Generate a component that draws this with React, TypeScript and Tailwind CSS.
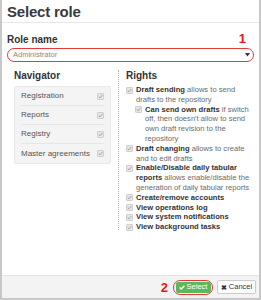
import React from "react";

const Check = ({ className = "" }: { className?: string }) => (
  <span
    className={
      "inline-flex items-center justify-center w-[7px] h-[7px] bg-[#e6e6e6] border border-[#d0d0d0] rounded-[1px] shrink-0 " +
      className
    }
  >
    <svg width="5" height="5" viewBox="0 0 10 10">
      <path d="M1.5 5.2 L4 7.6 L8.6 2.2" fill="none" stroke="#9a9a9a" strokeWidth="1.8" />
    </svg>
  </span>
);

const navItems = ["Registration", "Reports", "Registry", "Master agreements"];

export default function App() {
  return (
    <div
      className="w-[261px] h-[300px] bg-white border-x-2 border-b-2 border-[#c8c8c8] flex flex-col text-[#333]"
      style={{ fontFamily: '"Liberation Sans", Arial, sans-serif' }}
    >
      <div className="h-[23px] border-b border-[#e8e8e8] px-[5px] flex items-center">
        <span className="text-[15px] font-bold leading-none text-[#3a3a3a] tracking-[-0.2px]">Select role</span>
      </div>
      <div className="flex-1 px-[5px] pt-[10px] flex flex-col">
        <div className="flex items-end justify-between h-[12px]">
          <span className="text-[10px] font-bold leading-none">Role name</span>
          <span className="text-[13px] font-bold leading-none text-[#e8161b] mr-[8px]">1</span>
        </div>
        <div className="mt-[3px] h-[14px] border border-[#e53a3a] rounded-full flex items-center justify-between pl-[5px] pr-[3px]">
          <span className="text-[7.5px] text-[#8a8a8a] leading-none">Administrator</span>
          <svg width="5" height="4" viewBox="0 0 5 4">
            <path d="M0 0 L5 0 L2.5 3.5 Z" fill="#333" />
          </svg>
        </div>
        <div className="flex mt-[8px]">
          <div className="w-[112px] pl-[7px] pr-[7px] border-r border-dotted border-[#b5b5b5] h-[160px]">
            <div className="text-[10px] font-bold leading-none mt-[1px]">Navigator</div>
            <div className="mt-[5px] bg-[#f4f4f4] border border-[#e8e8e8] rounded-[2px] px-[6px]">
              {navItems.map((n, i) => (
                <div
                  key={n}
                  className={
                    "h-[19px] flex items-center justify-between " +
                    (i < navItems.length - 1 ? "border-b border-[#e6e6e6]" : "")
                  }
                >
                  <span className="text-[8px] text-[#555] leading-none">{n}</span>
                  <Check />
                </div>
              ))}
            </div>
          </div>
          <div className="flex-1 pl-[7px] pr-[4px]">
            <div className="text-[10px] font-bold leading-none mt-[1px]">Rights</div>
            <div className="mt-[4px] text-[7.6px] leading-[9.8px] text-[#6a6a6a]">
              <div className="flex gap-[3px]">
                <Check className="mt-[1.5px]" />
                <div>
                  <b className="text-[#333]">Draft sending</b> allows to send drafts to the repository
                </div>
              </div>
              <div className="flex gap-[3px] pl-[9px]">
                <Check className="mt-[1.5px]" />
                <div>
                  <b className="text-[#333]">Can send own drafts</b> if switch off, then doesn't allow to send own draft revision to the repository
                </div>
              </div>
              <div className="flex gap-[3px]">
                <Check className="mt-[1.5px]" />
                <div>
                  <b className="text-[#333]">Draft changing</b> allows to create and to edit drafts
                </div>
              </div>
              <div className="flex gap-[3px]">
                <Check className="mt-[1.5px]" />
                <div>
                  <b className="text-[#333]">Enable/Disable daily tabular reports</b> allows enable/disable the generation of daily tabular reports
                </div>
              </div>
              {["Create/remove accounts", "View operations log", "View system notifications", "View background tasks"].map((t) => (
                <div key={t} className="flex gap-[3px]">
                  <Check className="mt-[1.5px]" />
                  <b className="text-[#333]">{t}</b>
                </div>
              ))}
            </div>
          </div>
        </div>
      </div>
      <div className="h-[23px] bg-[#f3f3f3] border-t border-[#e4e4e4] flex items-center justify-end gap-[4px] pr-[3px]">
        <span className="text-[13px] font-bold leading-none text-[#e8161b] mr-[1px]">2</span>
        <div className="h-[15px] w-[40px] rounded-[7px] border border-[#e53a3a] flex items-center justify-center">
          <div className="h-[11px] w-[35px] bg-[#5cb85c] rounded-[2px] flex items-center justify-center gap-[2px]">
            <svg width="6" height="5" viewBox="0 0 10 8">
              <path d="M1 4 L3.8 6.6 L9 1.2" fill="none" stroke="white" strokeWidth="2.2" />
            </svg>
            <span className="text-[7.5px] text-white leading-none">Select</span>
          </div>
        </div>
        <div className="h-[14px] w-[39px] bg-white border border-[#ccc] rounded-[2px] flex items-center justify-center gap-[2px]">
          <span className="text-[7px] font-bold leading-none text-[#333]">✖</span>
          <span className="text-[7.5px] text-[#333] leading-none">Cancel</span>
        </div>
      </div>
    </div>
  );
}
